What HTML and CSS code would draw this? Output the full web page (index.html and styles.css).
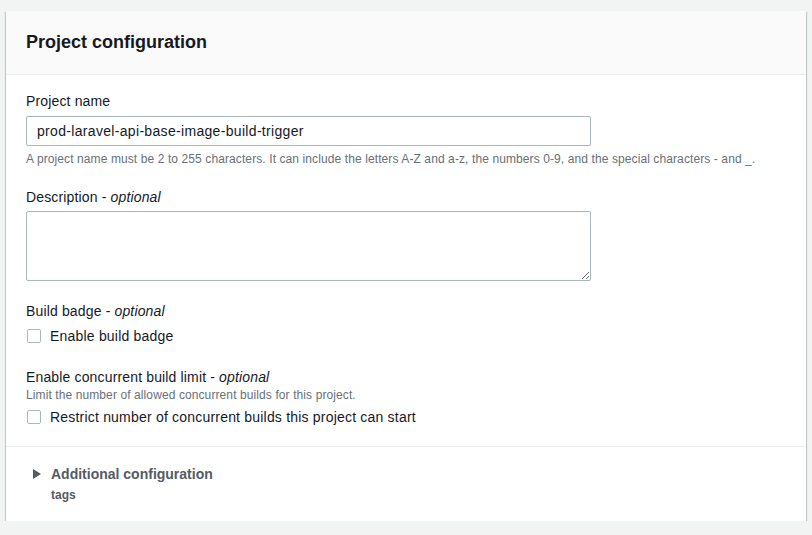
FILE: index.html
```html
<!DOCTYPE html>
<html lang="en">
<head>
<meta charset="utf-8">
<title>Project configuration</title>
<link rel="stylesheet" href="styles.css">
</head>
<body>
<div class="card">
  <div class="card-header">
    <h2 class="card-title">Project configuration</h2>
  </div>
  <div class="card-body">
    <div class="field">
      <label class="field-label" for="pname">Project name</label>
      <input class="text-input" id="pname" type="text" value="prod-laravel-api-base-image-build-trigger">
      <div class="hint hint-after">A project name must be 2 to 255 characters. It can include the letters A-Z and a-z, the numbers 0-9, and the special characters - and _.</div>
    </div>
    <div class="field">
      <label class="field-label desc" for="desc">Description - <i>optional</i></label>
      <textarea class="text-area" id="desc"></textarea>
    </div>
    <div class="field">
      <div class="field-label tight-check">Build badge - <i>optional</i></div>
      <label class="check-row"><span class="check-box"></span><span>Enable build badge</span></label>
    </div>
    <div class="field">
      <div class="field-label tight">Enable concurrent build limit - <i>optional</i></div>
      <div class="hint">Limit the number of allowed concurrent builds for this project.</div>
      <label class="check-row after-hint"><span class="check-box"></span><span>Restrict number of concurrent builds this project can start</span></label>
    </div>
  </div>
  <div class="card-footer">
    <div class="expand-row">
      <svg class="caret" width="8" height="10" viewBox="0 0 8 10"><path d="M0 0 L8 5 L0 10 Z" fill="#545b64"/></svg>
      <span class="expand-title">Additional configuration</span>
    </div>
    <div class="expand-sub">tags</div>
  </div>
</div>
</body>
</html>
```
FILE: styles.css
```css
html, body {
  margin: 0;
  padding: 0;
  background: #f2f3f3;
}
body {
  padding: 11px 6px 0 6px;
  font-family: "Liberation Sans", Arial, sans-serif;
  font-size: 14px;
  color: #16191f;
}
.card {
  width: 800px;
  background: #fff;
  box-shadow: 0 1px 1px 0 rgba(0, 28, 36, 0.3), 1px 1px 1px 0 rgba(0, 28, 36, 0.15), -1px 1px 1px 0 rgba(0, 28, 36, 0.15);
}
.card-header {
  background: #fafafa;
  border-bottom: 1px solid #eaeded;
  padding: 19px 20px 20px 20px;
}
.card-title {
  margin: 0;
  font-size: 18px;
  line-height: 24px;
  font-weight: 700;
  color: #16191f;
}
.card-body {
  padding: 16px 20px 18px 20px;
  border-bottom: 1px solid #eaeded;
  display: flex;
  flex-direction: column;
  gap: 20px;
  letter-spacing: 0.2px;
}
.field {
  display: flex;
  flex-direction: column;
}
.field-label {
  display: block;
  line-height: 20px;
  margin-bottom: 5px;
  color: #16191f;
  letter-spacing: 0.15px;
}
.field-label.desc {
  margin-bottom: 4px;
}
.field-label.tight {
  margin-bottom: 0;
}
.field-label.tight-check {
  margin-bottom: 4px;
}
.field-label i {
  font-style: italic;
}
.text-input {
  box-sizing: border-box;
  width: 565px;
  height: 30px;
  border: 1px solid #aab7b8;
  border-radius: 2px;
  padding: 0 10px;
  font: inherit;
  font-size: 14px;
  letter-spacing: 0.32px;
  color: #16191f;
  margin: 0;
}
.text-area {
  box-sizing: border-box;
  width: 565px;
  height: 70px;
  border: 1px solid #aab7b8;
  border-radius: 2px;
  padding: 4px 10px;
  font: inherit;
  margin: 0;
  display: block;
}
.hint {
  font-size: 12px;
  line-height: 16px;
  color: #687078;
  letter-spacing: 0.1px;
}
.hint-after {
  margin-top: 5px;
}
.check-row {
  display: flex;
  align-items: center;
  height: 22px;
  gap: 9px;
  color: #16191f;
}
.check-row.after-hint {
  margin-top: 3px;
}
.check-box {
  box-sizing: border-box;
  width: 14px;
  height: 14px;
  margin-left: 1px;
  border: 1px solid #aab7b8;
  border-radius: 2px;
  background: #fff;
}
.card-footer {
  padding: 16px 20px 18px 27px;
}
.expand-row {
  display: flex;
  align-items: center;
  gap: 10px;
  height: 22px;
}
.caret {
  display: block;
}
.expand-title {
  font-weight: 700;
  color: #545b64;
  line-height: 22px;
}
.expand-sub {
  margin-left: 18px;
  margin-top: 2px;
  font-size: 12px;
  line-height: 16px;
  font-weight: 700;
  color: #545b64;
}
```
